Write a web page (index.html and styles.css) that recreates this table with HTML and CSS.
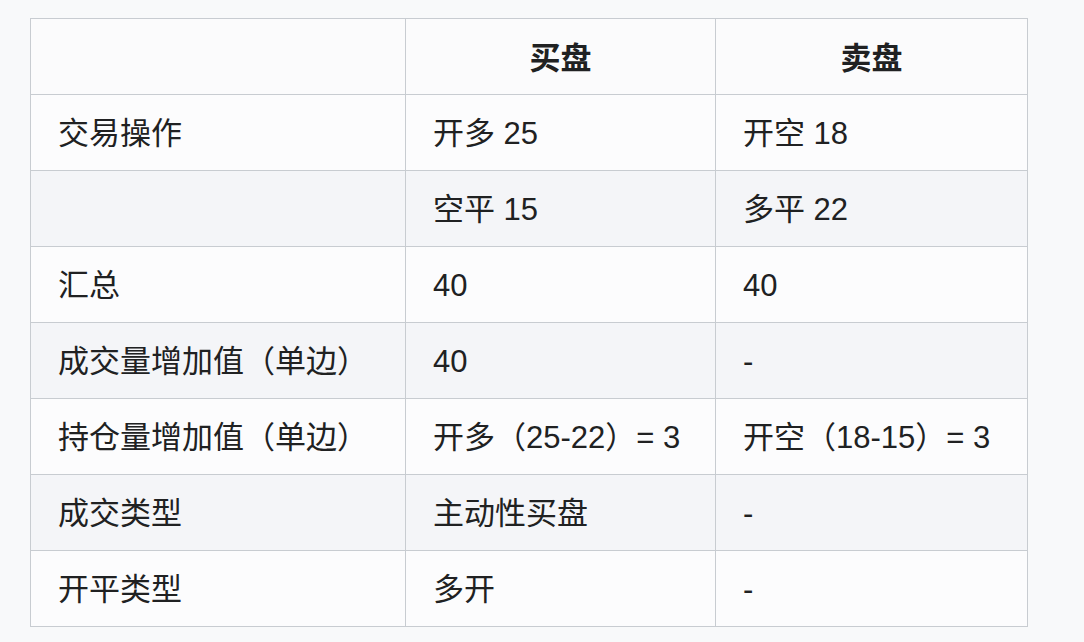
FILE: index.html
```html
<!DOCTYPE html>
<html lang="zh">
<head>
<meta charset="utf-8">
<link rel="stylesheet" href="styles.css">
</head>
<body>
<table class="tbl">
  <colgroup>
    <col class="c1"><col class="c2"><col class="c3">
  </colgroup>
  <thead>
    <tr><th></th><th>买盘</th><th>卖盘</th></tr>
  </thead>
  <tbody>
    <tr><td>交易操作</td><td>开多 25</td><td>开空 18</td></tr>
    <tr class="alt"><td></td><td>空平 15</td><td>多平 22</td></tr>
    <tr><td>汇总</td><td>40</td><td>40</td></tr>
    <tr class="alt"><td>成交量增加值（单边）</td><td>40</td><td>-</td></tr>
    <tr><td>持仓量增加值（单边）</td><td>开多（25-22）= 3</td><td>开空（18-15）= 3</td></tr>
    <tr class="alt"><td>成交类型</td><td>主动性买盘</td><td>-</td></tr>
    <tr><td>开平类型</td><td>多开</td><td>-</td></tr>
  </tbody>
</table>
</body>
</html>
```
FILE: styles.css
```css
html, body {
  margin: 0;
  padding: 0;
  background: #f8f9fa;
}
body {
  padding: 18px 0 0 30px;
  font-family: "Liberation Sans", "Noto Sans CJK SC", sans-serif;
  color: #202122;
}
.tbl {
  border-collapse: collapse;
  table-layout: fixed;
  width: 997px;
  background: #fcfcfd;
}
.c1 { width: 375px; }
.c2 { width: 310px; }
.c3 { width: 312px; }
.tbl th, .tbl td {
  border: 1px solid #c8ccd1;
  height: 76px;
  padding: 2px 0 0 27px;
  font-size: 31px;
  line-height: 1;
  vertical-align: middle;
  text-align: left;
  box-sizing: border-box;
  white-space: nowrap;
  text-spacing-trim: space-all;
}
.tbl th {
  font-weight: 700;
  text-align: center;
  padding: 4px 0 0 0;
  background: #fbfbfc;
}
.tbl tr.alt td {
  background: #f4f5f8;
}
```
